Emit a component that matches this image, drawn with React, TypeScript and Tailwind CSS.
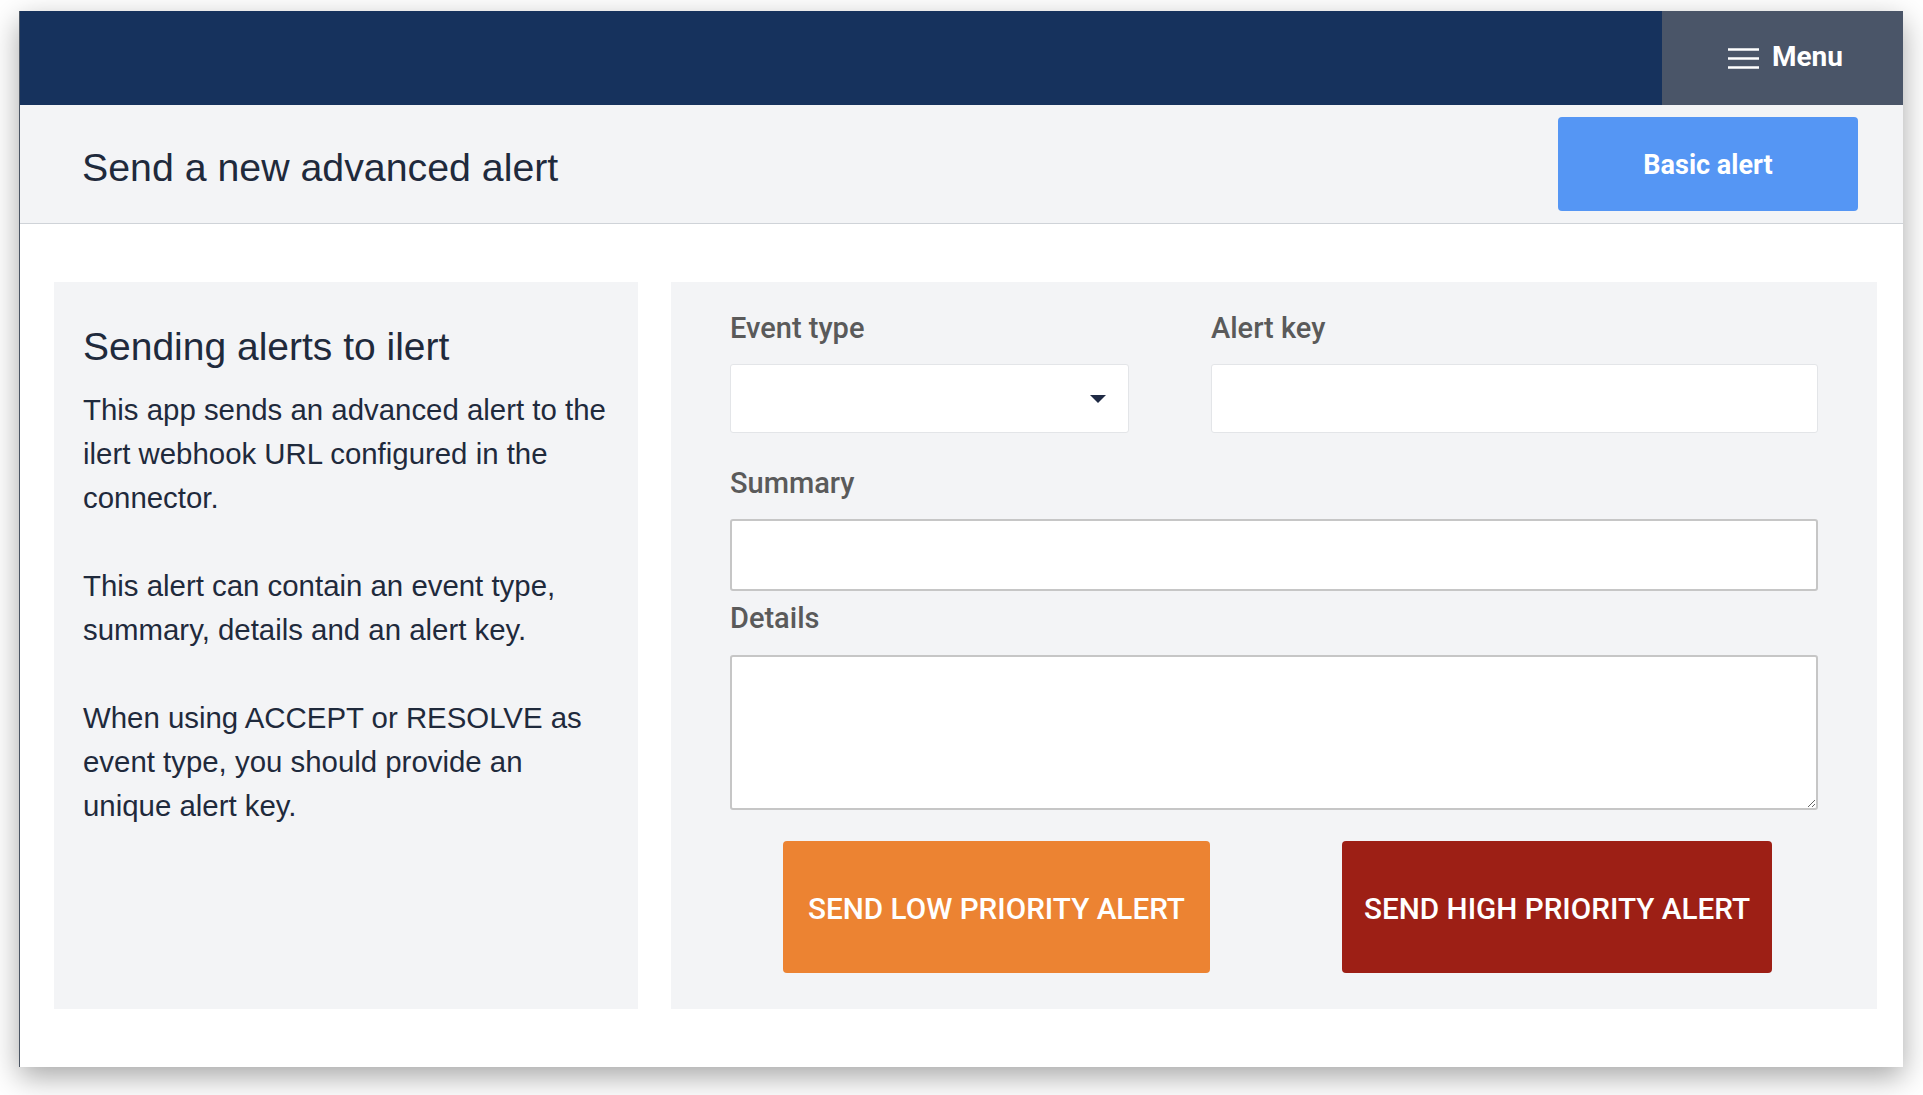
const roboto = { fontFamily: "Roboto, 'Noto Sans', sans-serif" };
const helv = { fontFamily: "'Liberation Sans', Arial, sans-serif" };

function Label({ children }: { children: React.ReactNode }) {
  return (
    <label
      className="block text-[29px] leading-[44px] font-medium text-[#5a5a5a]"
      style={roboto}
    >
      {children}
    </label>
  );
}

export default function App() {
  return (
    <div className="w-[1923px] h-[1095px] bg-white pt-[11px] pl-[19px]">
      <div className="flex w-[1884px] h-[1056px] flex-col bg-white border-l border-[#4b5563] shadow-[0_10px_28px_rgba(0,0,0,0.35)]">
        {/* top bar */}
        <div className="flex h-[94px] justify-end bg-[#16325d]">
          <button
            type="button"
            className="flex w-[241px] items-center justify-center gap-[13px] bg-[#4a5568] pl-[6px] text-[28px] font-bold text-white"
            style={roboto}
          >
            <svg width="31" height="21" viewBox="0 0 31 21">
              <path d="M0 1.5h31M0 10.5h31M0 19.5h31" stroke="white" strokeWidth="2.6" />
            </svg>
            <span className="-mt-[2px]">Menu</span>
          </button>
        </div>

        {/* header */}
        <div className="flex h-[119px] items-center justify-between border-b border-[#cfd3d8] bg-[#f3f4f6] pl-[62px] pr-[45px]">
          <h1 className="pt-[6px] text-[39.3px] leading-[47px] text-[#1f2a3c]" style={helv}>
            Send a new advanced alert
          </h1>
          <button
            type="button"
            className="h-[94px] w-[300px] rounded-[4px] bg-[#5596f4] pt-[3px] text-[27px] font-bold text-white"
            style={roboto}
          >
            Basic alert
          </button>
        </div>

        {/* body */}
        <div className="flex gap-[33px] pl-[34px] pr-[26px] pt-[58px]">
          <div className="w-[584px] bg-[#f3f4f6] pl-[29px] pr-[20px] pt-[41px]" style={helv}>
            <h2 className="text-[39px] leading-[48px] text-[#1f2a3c]">Sending alerts to ilert</h2>
            <div className="mt-[17px] text-[29.4px] leading-[44px] text-[#1f2a3c]">
              <p>This app sends an advanced alert to the ilert webhook URL configured in the connector.</p>
              <p className="mt-[44px]">
                This alert can contain an event type, summary, details and an alert key.
              </p>
              <p className="mt-[44px]">
                When using ACCEPT or RESOLVE as event type, you should provide an unique alert key.
              </p>
            </div>
          </div>

          <div className="w-[1206px] bg-[#f3f4f6] px-[59px] pt-[24px] pb-[36px]">
            <div className="flex gap-[82px]">
              <div className="w-[399px]">
                <Label>Event type</Label>
                <div className="relative mt-[14px]">
                  <select className="block h-[69px] w-full appearance-none rounded-[3px] border border-[#e3e5e8] bg-white" />
                  <svg
                    className="pointer-events-none absolute right-[23px] top-[31px]"
                    width="16"
                    height="8"
                    viewBox="0 0 16 8"
                  >
                    <path d="M0 0h16L8 8z" fill="#1f2a44" />
                  </svg>
                </div>
              </div>
              <div className="w-[607px]">
                <Label>Alert key</Label>
                <input className="mt-[14px] block h-[69px] w-full rounded-[3px] border border-[#e3e5e8] bg-white" />
              </div>
            </div>

            <div className="mt-[28px]">
              <Label>Summary</Label>
              <input className="mt-[14px] block h-[72px] w-full rounded-[3px] border-2 border-[#c6c6c6] bg-white" />
            </div>

            <div className="mt-[5px]">
              <Label>Details</Label>
              <textarea className="mt-[15px] block h-[155px] w-full rounded-[3px] border-2 border-[#c6c6c6] bg-white" />
            </div>

            <div className="mt-[31px] flex gap-[132px] pl-[53px]">
              <button
                type="button"
                className="h-[132px] w-[427px] rounded-[4px] bg-[#ec8332] pt-[4px] text-[29.7px] font-medium uppercase text-white"
                style={roboto}
              >
                Send low priority alert
              </button>
              <button
                type="button"
                className="h-[132px] w-[430px] rounded-[4px] bg-[#9d1f15] pt-[4px] text-[29.7px] font-medium uppercase text-white"
                style={roboto}
              >
                Send high priority alert
              </button>
            </div>
          </div>
        </div>
      </div>
    </div>
  );
}
